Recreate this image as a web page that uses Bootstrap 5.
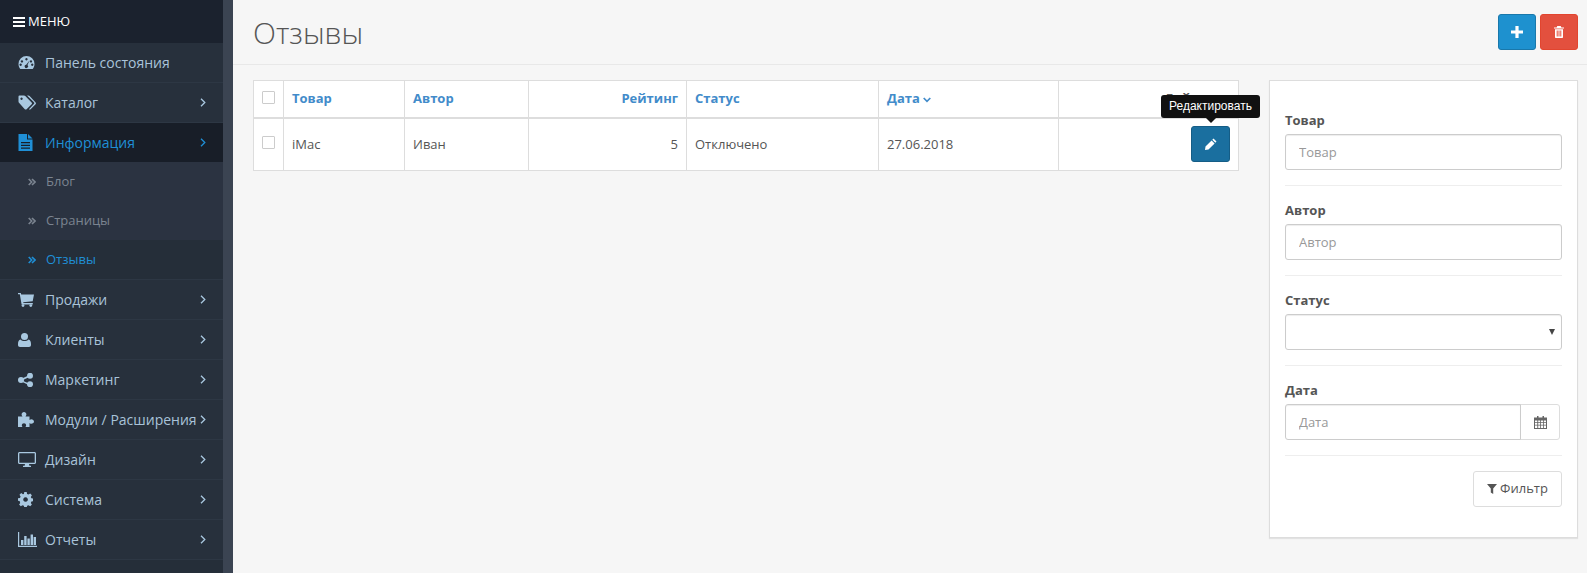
<!DOCTYPE html>
<html lang="ru"><head><meta charset="utf-8"><title>Отзывы</title>
<link href="https://cdn.jsdelivr.net/npm/bootstrap@5.3.0/dist/css/bootstrap.min.css" rel="stylesheet">
<style>
html,body{height:100%;overflow:hidden}
body{font-family:"Open Sans",sans-serif;font-size:13px;color:#555;background:#f6f6f6}
.shell{height:573px}
.side{width:233px;flex:none;background:#252e39;border-right:10px solid #3b4452;height:573px;overflow:hidden}
.menu-head{height:43px;background:#1b222e;color:#fff;font-size:13px;padding-left:13px;gap:3px}
.menu-list{list-style:none;margin:0;padding:0}
.m-item{height:40px;border-bottom:1px solid #2d3744;color:#a9c3d9;font-size:14px;padding:0 17px 0 18px;background:#27303c}
.m-item .ic{width:27px;flex:none;display:flex}
.m-item svg{fill:#a9c8e0}
.m-item .lbl{flex:1;white-space:nowrap}
.m-item .chev{fill:none;stroke:#a9c8e0;stroke-width:1.3}
.m-item.on{background:#181e28;color:#1f8fd6;border-bottom-color:#181e28;height:39px}
.m-item.on svg{fill:#1f8fd6}.m-item.on .chev{fill:none;stroke:#1f8fd6}
.s-item{height:39px;background:#2b3341;color:#7b8490;font-size:13px;padding-left:28px;gap:10px}
.s-item svg{fill:none;stroke:#7b8490;stroke-width:1.6}
.s-item.on{background:#252e39;color:#1f8fd6;border-bottom:1px solid #2d3744;height:40px}
.s-item.on svg{stroke:#1f8fd6}
.page{min-width:0}
.top-bar{height:65px;border-bottom:1px solid #e8e8e8;padding:2px 9px 0 20px}
.top-bar h1{font-family:"Open Sans",sans-serif;font-weight:300;font-size:30px;color:#555;margin:0}
.act-group{margin-top:-2px}
.sq{width:38px;height:36px;padding:0;border-radius:3px;border:1px solid;display:flex;align-items:center;justify-content:center}
.sq-add{background:#1e91cf;border-color:#1978ab}
.sq-del{background:#e3503e;border-color:#e2452f;margin-left:4px}
.body-row{padding:15px 9px 0 20px;gap:30px;align-items:flex-start}
.tbl-wrap{width:986px;flex:none;position:relative}
.rev{table-layout:fixed;width:985px;margin:0;background:#fff;--bs-table-bg:#fff;border-color:#ddd;font-size:13px;color:#555}
.rev th,.rev td{border:1px solid #ddd;padding:0 8px;vertical-align:middle;color:#555}
.rev thead tr{height:37px}
.rev thead th{border-bottom:2px solid #ddd;font-weight:700}
.rev tbody tr{height:53px}
.rev th a{color:#428bca;text-decoration:none}
.box{width:13px;height:13px;border:1px solid #ccc;background:#fff;display:block;border-radius:1px}
.hd-box{position:relative;top:-1px}
.row-box{position:relative;top:-2px}
.edit-btn{width:39px;height:36px;background:#1a6f9f;border:1px solid #155d86;border-radius:3px;padding:0;display:flex;align-items:center;justify-content:center;margin-left:auto;margin-right:0}
.tip{position:absolute;left:908px;top:15px;width:99px;height:28px}
.tip-in{display:block;background:#111;color:#fff;font-family:"Liberation Sans",sans-serif;font-size:12px;height:23px;line-height:23px;text-align:center;border-radius:3px;white-space:nowrap}
.tip-arr{display:block;width:0;height:0;border:5px solid transparent;border-top-color:#111;border-bottom:0;margin:0 auto}
.filter{width:309px;flex:none;background:#fff;border:1px solid #ddd;box-shadow:0 1px 1px rgba(0,0,0,.08);height:458px;padding:29px 15px 0}
.f-lbl{display:block;font-weight:700;font-size:13px;color:#555;line-height:20px;margin:0 0 4px}
.f-ctl{height:36px;font-size:13px;border:1px solid #ccc;border-radius:3px;padding:0 13px;color:#555;box-shadow:inset 0 1px 1px rgba(0,0,0,.075)}
.f-ctl::placeholder{color:#999}
.f-sel{background-image:none;padding-right:20px}
.sel-wrap{position:relative}
.sel-caret{position:absolute;right:7px;top:15px;width:0;height:0;border:3px solid transparent;border-top:6px solid #444;border-bottom:0}
.f-sep{margin:15px 0 14px;border:0;border-top:1px solid #eee;opacity:1}
.f-sep-last{margin-bottom:15px}
.cal{width:40px;background:#fff;border:1px solid #ddd;border-radius:0 3px 3px 0;display:flex;align-items:center;justify-content:center;padding:0}
.date-grp{width:275px;height:36px}
.go{height:36px;width:89px;padding:0;background:#fff;border:1px solid #ddd;border-radius:3px;color:#555;font-size:13px;gap:3px}
</style></head>
<body>
<div class="d-flex shell">
<aside class="side">
 <div class="menu-head d-flex align-items-center">
  <svg width="12" height="10" viewBox="0 0 12 10" fill="#fff"><rect width="12" height="2"/><rect y="4" width="12" height="2"/><rect y="8" width="12" height="2"/></svg><span>МЕНЮ</span>
 </div>
 <ul class="menu-list">
  <li class="m-item d-flex align-items-center"><span class="ic"><svg width="17" height="15" viewBox="0 0 17 15"><path fill-rule="evenodd" d="M8.500 1A8 8 0 0 0 .5 9c0 2 .7 3.700 1.800 5h12.400c1.100-1.300 1.800-3 1.800-5a8 8 0 0 0-8-8zM4 5.200a1.200 1.200 0 1 1-.1 0zM8.500 3a1.200 1.200 0 1 1-.1 0zM2.700 8.500a1.200 1.200 0 1 1-.1 0zM14.300 8.500a1.200 1.200 0 1 1-.1 0zM13 5.200a1.200 1.200 0 1 1-.1 0zM11.500 5.500l-2 4.600a1.700 1.700 0 1 1-1.300-.4z"/></svg></span><span class="lbl">Панель состояния</span></li>
  <li class="m-item d-flex align-items-center"><span class="ic"><svg width="18" height="15" viewBox="0 0 18 15"><path fill-rule="evenodd" d="M.5 1.500A1 1 0 0 1 1.500.5H6c.5 0 1 .3 1.300.6l6.300 6.300c.5.500.5 1.300 0 1.800l-5 5c-.5.500-1.300.5-1.800 0L1 7.800C.7 7.500.5 7 .5 6.500zM3.500 2.500a1.200 1.200 0 1 0 .1 0z"/><path d="M9 .5h1.300c.5 0 1 .3 1.300.6l6 6.300c.5.500.5 1.300 0 1.800l-5 5c-.5.500-1.200.5-1.700.1l5-5.200c.5-.5.500-1.300 0-1.800z"/></svg></span><span class="lbl">Каталог</span><svg class="chev" width="6" height="9" viewBox="0 0 6 9"><path d="M1 .7 4.800 4.500 1 8.300"/></svg></li>
  <li class="m-item on d-flex align-items-center"><span class="ic"><svg width="15" height="17" viewBox="0 0 15 17"><path fill-rule="evenodd" d="M.5 0H9v5.500h5.500V17H.5zM3 8v1.300h9V8zM3 10.700V12h9v-1.300zM3 13.400v1.300h9v-1.300z"/><path d="M10 0l4.500 4.500H10z"/></svg></span><span class="lbl">Информация</span><svg class="chev" width="6" height="9" viewBox="0 0 6 9"><path d="M1 .7 4.800 4.500 1 8.300"/></svg></li>
  <li class="s-item d-flex align-items-center"><svg width="8" height="8" viewBox="0 0 8 8"><path d="M.7 1 3.700 4 .7 7M4 1l3 3-3 3"/></svg><span>Блог</span></li>
  <li class="s-item d-flex align-items-center"><svg width="8" height="8" viewBox="0 0 8 8"><path d="M.7 1 3.700 4 .7 7M4 1l3 3-3 3"/></svg><span>Страницы</span></li>
  <li class="s-item on d-flex align-items-center"><svg width="8" height="8" viewBox="0 0 8 8"><path d="M.7 1 3.700 4 .7 7M4 1l3 3-3 3"/></svg><span>Отзывы</span></li>
  <li class="m-item d-flex align-items-center"><span class="ic"><svg width="16" height="14" viewBox="0 0 16 14"><path d="M0 0h2.800l.4 1.500H16l-1.300 6.700-9.500 1 .2 .9h9.400v1.300H3.600L1.800 1.300H0z"/><circle cx="5" cy="12.600" r="1.400"/><circle cx="12.800" cy="12.600" r="1.400"/></svg></span><span class="lbl">Продажи</span><svg class="chev" width="6" height="9" viewBox="0 0 6 9"><path d="M1 .7 4.800 4.500 1 8.300"/></svg></li>
  <li class="m-item d-flex align-items-center"><span class="ic"><svg width="13" height="14" viewBox="0 0 13 14"><circle cx="6.500" cy="3.500" r="3.500"/><path d="M2.500 6.500c1 1 2.400 1.600 4 1.600s3-.6 4-1.600c1.700.3 2.500 2 2.500 4.500v1c0 1.200-.8 2-2 2H2c-1.200 0-2-.8-2-2v-1c0-2.500.8-4.200 2.500-4.500z"/></svg></span><span class="lbl">Клиенты</span><svg class="chev" width="6" height="9" viewBox="0 0 6 9"><path d="M1 .7 4.800 4.500 1 8.300"/></svg></li>
  <li class="m-item d-flex align-items-center"><span class="ic"><svg width="15" height="14" viewBox="0 0 15 14"><circle cx="12" cy="2.800" r="3"/><circle cx="12" cy="11.200" r="3"/><circle cx="3" cy="7" r="3"/><path d="M3 6l8.500-4 .8 1.500L4 7.500l8.300 3.500-.8 1.500L3 8.300z"/></svg></span><span class="lbl">Маркетинг</span><svg class="chev" width="6" height="9" viewBox="0 0 6 9"><path d="M1 .7 4.800 4.500 1 8.300"/></svg></li>
  <li class="m-item d-flex align-items-center"><span class="ic"><svg width="16" height="15" viewBox="0 0 16 15"><path d="M0 4.500h4.500c-.8-1-.9-1.700-.9-2.200C3.600 1 4.700 0 6 0s2.400 1 2.400 2.300c0 .5-.2 1.200-.9 2.200H11.500v3.500c.8-.6 1.300-.8 1.800-.8C14.800 7.200 16 8.200 16 9.500s-1.200 2.200-2.700 2.200c-.5 0-1-.2-1.800-.8V15H7.500c.5-.8.600-1.300.6-1.700C8.100 12.200 7.200 11.300 6 11.300s-2.200.9-2.200 2c0 .4.200 1 .7 1.700H0z"/></svg></span><span class="lbl">Модули / Расширения</span><svg class="chev" width="6" height="9" viewBox="0 0 6 9"><path d="M1 .7 4.800 4.500 1 8.300"/></svg></li>
  <li class="m-item d-flex align-items-center"><span class="ic"><svg width="18" height="15" viewBox="0 0 18 15"><path fill-rule="evenodd" d="M1.500 0h15C17.300 0 18 .7 18 1.500v9c0 .8-.7 1.500-1.500 1.500H11l.4 1.700H13V15H5v-1.300h1.600L7 12H1.500C.7 12 0 11.300 0 10.500v-9C0 .7.700 0 1.500 0zM1.300 1.300v9.400h15.400V1.300z"/></svg></span><span class="lbl">Дизайн</span><svg class="chev" width="6" height="9" viewBox="0 0 6 9"><path d="M1 .7 4.800 4.500 1 8.300"/></svg></li>
  <li class="m-item d-flex align-items-center"><span class="ic"><svg width="15" height="15" viewBox="0 0 15 15"><path fill-rule="evenodd" d="M6.300 0h2.400l.4 2 1.400.6 1.700-1.100 1.700 1.700-1.100 1.700.6 1.400 2 .4v2.400l-2 .4-.6 1.400 1.100 1.700-1.700 1.700-1.700-1.100-1.400.6-.4 2H6.300l-.4-2-1.400-.6-1.700 1.100-1.700-1.700 1.100-1.700L1.600 9.100l-1.600-.4V6.300l2-.4.600-1.400L1.500 2.800l1.700-1.700 1.700 1.100L5.900 2zM7.500 5.200a2.300 2.300 0 1 0 .1 0z"/></svg></span><span class="lbl">Система</span><svg class="chev" width="6" height="9" viewBox="0 0 6 9"><path d="M1 .7 4.800 4.500 1 8.300"/></svg></li>
  <li class="m-item d-flex align-items-center"><span class="ic"><svg width="19" height="15" viewBox="0 0 19 15"><path d="M0 0h1.200v13.800H19V15H0zM3 8h2.400v5H3zM6.200 4h2.400v9H6.200zM9.400 6.500h2.400V13H9.400zM12.600 2.500H15V13h-2.400zM15.600 5H18v8h-2.400z"/></svg></span><span class="lbl">Отчеты</span><svg class="chev" width="6" height="9" viewBox="0 0 6 9"><path d="M1 .7 4.800 4.500 1 8.300"/></svg></li>
 </ul>
</aside>
<main class="page flex-grow-1">
 <header class="top-bar d-flex align-items-center justify-content-between">
  <h1>Отзывы</h1>
  <div class="d-flex act-group">
   <button class="btn sq sq-add" type="button" aria-label="Добавить"><svg width="12" height="12" viewBox="0 0 12 12" fill="#fff"><path d="M4.400 0h3.200v4.400H12v3.200H7.600V12H4.400V7.600H0V4.400h4.400z"/></svg></button>
   <button class="btn sq sq-del" type="button" aria-label="Удалить"><svg width="10" height="12" viewBox="0 0 10 12" fill="#fff"><path fill-rule="evenodd" d="M3.300 0h3.400l.7 1.400H10v1.100H0V1.400h2.600zM1 3.300h8V11c0 .6-.4 1-1 1H2c-.6 0-1-.4-1-1zM2.700 4.500v6h1v-6zM4.500 4.500v6h1v-6zM6.300 4.500v6h1v-6z"/></svg></button>
  </div>
 </header>
 <div class="body-row d-flex">
  <div class="tbl-wrap">
   <table class="table table-bordered rev">
    <colgroup><col style="width:30px"><col style="width:121px"><col style="width:124px"><col style="width:158px"><col style="width:192px"><col style="width:180px"><col style="width:180px"></colgroup>
    <thead><tr>
     <th><span class="box hd-box"></span></th>
     <th><a href="#">Товар</a></th>
     <th><a href="#">Автор</a></th>
     <th class="text-end"><a href="#">Рейтинг</a></th>
     <th><a href="#">Статус</a></th>
     <th><a href="#">Дата <svg width="8" height="6" viewBox="0 0 8 6" fill="none" stroke="#428bca" stroke-width="1.700"><path d="M.7 1 4 4.300 7.300 1"/></svg></a></th>
     <th class="text-end">Действие</th>
    </tr></thead>
    <tbody><tr>
     <td><span class="box row-box"></span></td>
     <td>iMac</td><td>Иван</td><td class="text-end">5</td><td>Отключено</td><td>27.06.2018</td>
     <td><button class="edit-btn" type="button" aria-label="Редактировать"><svg width="12" height="12" viewBox="0 0 12 12" fill="#fff"><path d="M8.500.5 11.500 3.500 10.300 4.700 7.300 1.700zM6.600 2.400 9.600 5.400 3.500 11.500 0 12 .5 8.500z"/></svg></button></td>
    </tr></tbody>
   </table>
   <div class="tip"><span class="tip-in">Редактировать</span><span class="tip-arr"></span></div>
  </div>
  <section class="filter">
   <label class="f-lbl">Товар</label>
   <input class="form-control f-ctl" placeholder="Товар">
   <hr class="f-sep">
   <label class="f-lbl">Автор</label>
   <input class="form-control f-ctl" placeholder="Автор">
   <hr class="f-sep">
   <label class="f-lbl">Статус</label>
   <div class="sel-wrap"><select class="form-select f-ctl f-sel"><option></option></select><span class="sel-caret"></span></div>
   <hr class="f-sep">
   <label class="f-lbl">Дата</label>
   <div class="input-group date-grp"><input class="form-control f-ctl" placeholder="Дата"><button class="cal" type="button" aria-label="Календарь"><svg width="13" height="13" viewBox="0 0 13 13" fill="#666"><path fill-rule="evenodd" d="M3 0h1.500v1.500h4V0H10v1.500h3V13H0V1.500h3zM1 4.500v1.700h2.300V4.500zM4.200 4.500v1.700h2V4.500zM7 4.500v1.700h2V4.500zM9.800 4.500v1.700H12V4.500zM1 7v1.700h2.300V7zM4.200 7v1.700h2V7zM7 7v1.700h2V7zM9.800 7v1.700H12V7zM1 9.500V12h2.300V9.500zM4.200 9.500V12h2V9.500zM7 9.500V12h2V9.500zM9.800 9.500V12H12V9.500z"/></svg></button></div>
   <hr class="f-sep f-sep-last">
   <div class="d-flex justify-content-end"><button class="btn go d-flex align-items-center justify-content-center" type="button"><svg width="10" height="10" viewBox="0 0 10 10" fill="#555"><path d="M0 0h10L6.200 4.500V10L3.800 8.500v-4z"/></svg><span>Фильтр</span></button></div>
  </section>
 </div>
</main>
</div>
<script src="https://cdn.jsdelivr.net/npm/bootstrap@5.3.0/dist/js/bootstrap.bundle.min.js"></script>
</body></html>
